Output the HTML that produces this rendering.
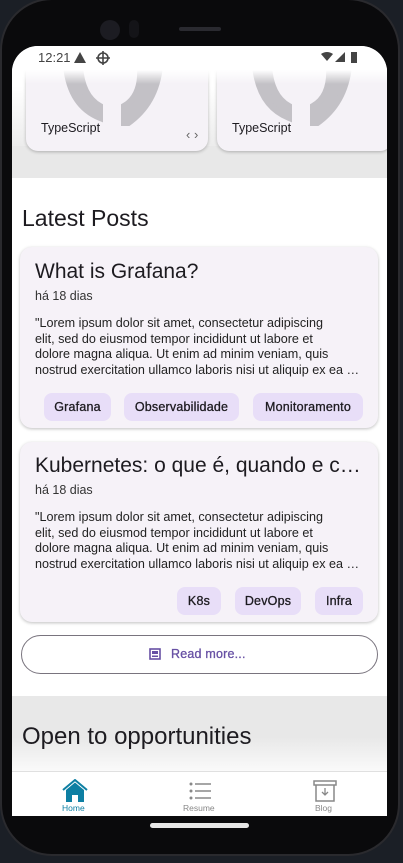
<!DOCTYPE html>
<html><head><meta charset="utf-8"><style>
*{margin:0;padding:0;box-sizing:border-box}
body{width:403px;height:863px;background:#1b1f26;position:relative;overflow:hidden;font-family:"Liberation Sans",sans-serif;color:#1d1b20}
.phone{position:absolute;left:0;top:-2px;width:400px;height:858px;background:#0a0a0c;border-radius:52px;border:2px solid #2a2a2e}
.screen{position:absolute;left:12px;top:46px;width:375px;height:770px;background:#fff;border-radius:26px 26px 0 0;overflow:hidden}
.a{position:absolute}
.card{position:absolute;background:#f6f2f8;border-radius:12px;box-shadow:0 1px 3px rgba(0,0,0,.25)}
.chip{position:absolute;height:28px;background:#e8def8;border-radius:8px;font-size:12.5px;color:#1d1b20;text-align:center;line-height:28px;letter-spacing:.2px;-webkit-text-stroke:.3px #1d1b20}
.body{position:absolute;left:15px;width:340px;white-space:nowrap;font-size:12.6px;line-height:15.5px;color:#222}
</style></head><body>
<div class="phone"></div>
<div class="a" style="left:100px;top:20px;width:20px;height:20px;border-radius:50%;background:#1c1c22"></div>
<div class="a" style="left:129px;top:20px;width:10px;height:18px;border-radius:5px;background:#141418"></div>
<div class="a" style="left:179px;top:27px;width:42px;height:4px;border-radius:2px;background:#2a2a30"></div>
<div class="screen">
 <div class="a" style="left:0;top:95px;width:375px;height:37px;background:#e8e8e8"></div>
 <div class="a" style="left:0;top:40px;width:375px;height:60px;background:linear-gradient(#fff,#ececec)"></div>
 <div class="card" style="left:14px;top:20px;width:182px;height:85px;border-radius:0 0 12px 12px;overflow:hidden;background:#f5f2f7">
  <svg class="a" style="left:34px;top:0" width="120" height="60"><path d="M6 0 Q10 40 40 52 L40 40 Q22 30 20 0Z M75 0 L100 0 Q96 40 64 60 L64 40 Q82 30 80 0Z M18 30 Q30 35 40 50" fill="#c3c1c6" stroke="#c3c1c6" stroke-width="6"/></svg>
  <div class="a" style="left:15px;top:55px;font-size:12.5px;color:#1d1b20">TypeScript</div>
  <div class="a" style="left:160px;top:61px;font-size:13px;color:#666">‹ ›</div>
 </div>
 <div class="card" style="left:205px;top:20px;width:175px;height:85px;border-radius:0 0 12px 12px;overflow:hidden;background:#f5f2f7">
  <svg class="a" style="left:32px;top:0" width="120" height="60"><path d="M6 0 Q10 40 40 52 L40 40 Q22 30 20 0Z M75 0 L100 0 Q96 40 64 60 L64 40 Q82 30 80 0Z M18 30 Q30 35 40 50" fill="#c3c1c6" stroke="#c3c1c6" stroke-width="6"/></svg>
  <div class="a" style="left:15px;top:55px;font-size:12.5px;color:#1d1b20">TypeScript</div>
 </div>
 <div class="a" style="left:0;top:24px;width:375px;height:14px;background:linear-gradient(#fff,rgba(255,255,255,0))"></div>
 <div class="a" style="left:0;top:0;width:375px;height:24px;background:#fff"></div>
 <div class="a" style="left:26px;top:4px;font-size:13px;color:#444">12:21</div>
 <svg class="a" style="left:61px;top:5px" width="40" height="14"><path d="M1 12 L7 1 L13 12Z" fill="#444"/><circle cx="30" cy="7" r="5" fill="none" stroke="#444" stroke-width="1.6"/><path d="M30 0 V14 M23 7 H37" stroke="#444" stroke-width="1.6"/></svg>
 <svg class="a" style="left:309px;top:5px" width="42" height="14"><path d="M0 3 Q6 -1 12 3 L6 10Z" fill="#444"/><path d="M14 11 L24 1 V11Z" fill="#444"/><rect x="30" y="1" width="6" height="11" fill="#444"/></svg>

 <div class="a" style="left:10px;top:159px;font-size:23px;color:#1d1b20">Latest Posts</div>

 <div class="card" style="left:8px;top:201px;width:358px;height:181px">
  <div class="a" style="left:15px;top:13px;font-size:21px">What is Grafana?</div>
  <div class="a" style="left:15px;top:42px;font-size:12.5px;color:#333">há 18 dias</div>
  <div class="body" style="top:69px">"Lorem ipsum dolor sit amet, consectetur adipiscing<br>elit, sed do eiusmod tempor incididunt ut labore et<br>dolore magna aliqua. Ut enim ad minim veniam, quis<br>nostrud exercitation ullamco laboris nisi ut aliquip ex ea …</div>
  <div class="chip" style="left:24px;top:146px;width:67px">Grafana</div>
  <div class="chip" style="left:104px;top:146px;width:115px">Observabilidade</div>
  <div class="chip" style="left:233px;top:146px;width:110px">Monitoramento</div>
 </div>

 <div class="card" style="left:8px;top:396px;width:358px;height:180px">
  <div class="a" style="left:15px;top:12px;font-size:21px;white-space:nowrap">Kubernetes: o que é, quando e c…</div>
  <div class="a" style="left:15px;top:41px;font-size:12.5px;color:#333">há 18 dias</div>
  <div class="body" style="top:68px">"Lorem ipsum dolor sit amet, consectetur adipiscing<br>elit, sed do eiusmod tempor incididunt ut labore et<br>dolore magna aliqua. Ut enim ad minim veniam, quis<br>nostrud exercitation ullamco laboris nisi ut aliquip ex ea …</div>
  <div class="chip" style="left:157px;top:145px;width:44px">K8s</div>
  <div class="chip" style="left:215px;top:145px;width:66px">DevOps</div>
  <div class="chip" style="left:295px;top:145px;width:48px">Infra</div>
 </div>

 <div class="a" style="left:9px;top:589px;width:357px;height:39px;border:1px solid #79747e;border-radius:20px"></div>
 <svg class="a" style="left:137px;top:602px" width="12" height="12"><rect x="1" y="1" width="10" height="10" fill="none" stroke="#6750a4" stroke-width="1.6"/><rect x="3" y="3" width="6" height="3" fill="#6750a4"/><rect x="3" y="7.5" width="6" height="1.5" fill="#6750a4"/></svg>
 <div class="a" style="left:159px;top:601px;font-size:12.5px;color:#6750a4;letter-spacing:.2px;-webkit-text-stroke:.3px #6750a4">Read more...</div>

 <div class="a" style="left:0;top:650px;width:375px;height:75px;background:linear-gradient(#e8e8e8 0,#e8e8e8 55%,#fafafa 100%)"></div>
 <div class="a" style="left:10px;top:677px;font-size:24px;color:#1d1b20">Open to opportunities</div>

 <div class="a" style="left:0;top:725px;width:375px;height:45px;background:#fff;border-top:1px solid #e0e0e0"></div>
 <svg class="a" style="left:50px;top:733px" width="26" height="24"><path d="M1 11 L13 1 L25 11" fill="none" stroke="#0e7fa3" stroke-width="2"/><path d="M4 11 L13 3.5 L22 11 V23 H16 V16 H10 V23 H4Z" fill="#0e7fa3"/></svg>
 <div class="a" style="left:50px;top:757px;font-size:8.5px;color:#0e7fa3">Home</div>
 <svg class="a" style="left:177px;top:736px" width="24" height="18"><circle cx="2" cy="2" r="1.5" fill="#888"/><circle cx="2" cy="9" r="1.5" fill="#888"/><circle cx="2" cy="16" r="1.5" fill="#888"/><path d="M6 2 H22 M6 9 H22 M6 16 H22" stroke="#888" stroke-width="1.6"/></svg>
 <div class="a" style="left:171px;top:757px;font-size:8.5px;color:#888">Resume</div>
 <svg class="a" style="left:301px;top:734px" width="24" height="22"><rect x="1" y="1" width="22" height="4" fill="none" stroke="#888" stroke-width="1.5"/><path d="M3 5 V21 H21 V5" fill="none" stroke="#888" stroke-width="1.5"/><path d="M12 8 V15 M9 12 L12 15 L15 12" fill="none" stroke="#888" stroke-width="1.3"/></svg>
 <div class="a" style="left:303px;top:757px;font-size:8.5px;color:#888">Blog</div>
</div>
<div class="a" style="left:150px;top:823px;width:99px;height:5px;border-radius:3px;background:#e6e6e6"></div>
</body></html>
